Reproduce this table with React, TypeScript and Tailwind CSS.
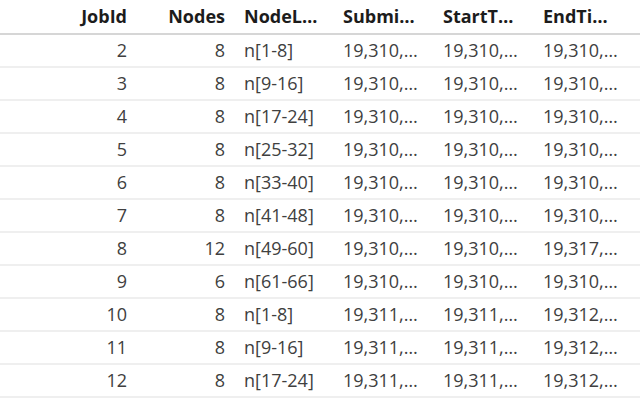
import React from 'react';

const rows = [
  { id: 2, nodes: 8, list: 'n[1-8]', submit: '19,310,…', start: '19,310,…', end: '19,310,…' },
  { id: 3, nodes: 8, list: 'n[9-16]', submit: '19,310,…', start: '19,310,…', end: '19,310,…' },
  { id: 4, nodes: 8, list: 'n[17-24]', submit: '19,310,…', start: '19,310,…', end: '19,310,…' },
  { id: 5, nodes: 8, list: 'n[25-32]', submit: '19,310,…', start: '19,310,…', end: '19,310,…' },
  { id: 6, nodes: 8, list: 'n[33-40]', submit: '19,310,…', start: '19,310,…', end: '19,310,…' },
  { id: 7, nodes: 8, list: 'n[41-48]', submit: '19,310,…', start: '19,310,…', end: '19,310,…' },
  { id: 8, nodes: 12, list: 'n[49-60]', submit: '19,310,…', start: '19,310,…', end: '19,317,…' },
  { id: 9, nodes: 6, list: 'n[61-66]', submit: '19,310,…', start: '19,310,…', end: '19,310,…' },
  { id: 10, nodes: 8, list: 'n[1-8]', submit: '19,311,…', start: '19,311,…', end: '19,312,…' },
  { id: 11, nodes: 8, list: 'n[9-16]', submit: '19,311,…', start: '19,311,…', end: '19,312,…' },
  { id: 12, nodes: 8, list: 'n[17-24]', submit: '19,311,…', start: '19,311,…', end: '19,312,…' },
];

const App = () => {
  return (
    <div
      className="w-[640px] h-[400px] overflow-hidden bg-white text-[18px]"
      style={{ fontFamily: '"Open Sans", sans-serif' }}
    >
      {/* Header */}
      <div className="flex h-[35px] border-b-2 border-[#d6d6d6] font-bold text-[#1c1c1c] items-center whitespace-nowrap">
        <div className="w-[136px] shrink-0 pr-[9px] text-right">JobId</div>
        <div className="w-[98px] shrink-0 pr-[9px] text-right">Nodes</div>
        <div className="w-[100px] shrink-0 pl-[10px]">NodeL…</div>
        <div className="w-[100px] shrink-0 pl-[9px]">Submi…</div>
        <div className="w-[100px] shrink-0 pl-[9px]">StartT…</div>
        <div className="w-[100px] shrink-0 pl-[9px]">EndTi…</div>
      </div>

      {/* Rows */}
      {rows.map((r) => (
        <div
          key={r.id}
          className="flex h-[33px] border-b-2 border-[#efefef] items-center text-[#404040] whitespace-nowrap"
        >
          <div className="w-[136px] shrink-0 pr-[9px] text-right">{r.id}</div>
          <div className="w-[98px] shrink-0 pr-[9px] text-right">{r.nodes}</div>
          <div className="w-[100px] shrink-0 pl-[10px]">{r.list}</div>
          <div className="w-[100px] shrink-0 pl-[9px]">{r.submit}</div>
          <div className="w-[100px] shrink-0 pl-[9px]">{r.start}</div>
          <div className="w-[100px] shrink-0 pl-[9px]">{r.end}</div>
        </div>
      ))}
    </div>
  );
};

export default App;
